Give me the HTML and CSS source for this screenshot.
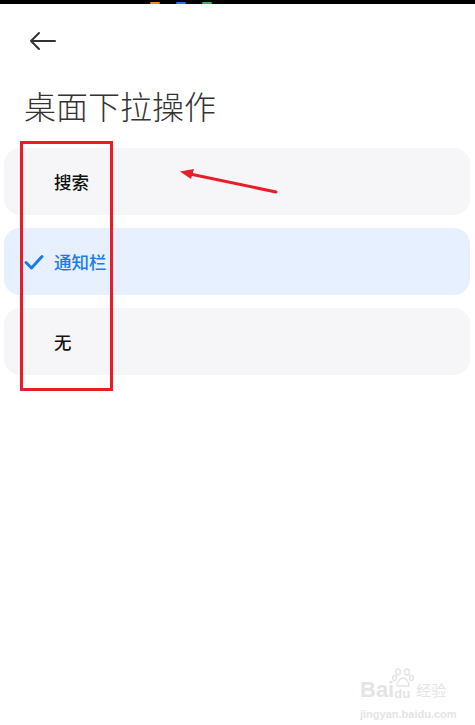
FILE: index.html
```html
<!DOCTYPE html>
<html lang="zh-CN">
<head>
    <meta charset="UTF-8">
    <meta name="viewport" content="width=device-width, initial-scale=1.0">
    <title>桌面下拉操作</title>
    <link rel="stylesheet" href="styles.css">
</head>
<body>

    <div class="statusbar">
        <span class="sb-dot orange"></span>
        <span class="sb-dot blue"></span>
        <span class="sb-dot green"></span>
    </div>

    <div class="nav">
        <svg class="back" width="28" height="20" viewBox="0 0 28 20">
            <path d="M27 10H3M11 2L3 10l8 8" fill="none" stroke="#333" stroke-width="2" stroke-linecap="round" stroke-linejoin="round"/>
        </svg>
    </div>

    <h1 class="title">桌面下拉操作</h1>

    <!-- Opzioni -->
    <div class="options">
        <div class="option">
            <span class="check"></span>
            <span class="label">搜索</span>
        </div>
        <div class="option selected">
            <span class="check">
                <svg width="20" height="16" viewBox="0 0 20 16">
                    <path d="M2 8.5l5.5 5.5L18 2.5" fill="none" stroke="#1b7ce8" stroke-width="3" stroke-linecap="round" stroke-linejoin="round"/>
                </svg>
            </span>
            <span class="label">通知栏</span>
        </div>
        <div class="option">
            <span class="check"></span>
            <span class="label">无</span>
        </div>
    </div>

    <!-- Annotazioni -->
    <div class="mark-box"></div>
    <svg class="mark-arrow" width="104" height="34" viewBox="0 0 104 34">
        <path d="M98 28L12 10" stroke="#ea1c2a" stroke-width="3" stroke-linecap="round"/>
        <path d="M2 7.5l14-2.5-3 10z" fill="#ea1c2a"/>
    </svg>

    <div class="watermark">
        <div class="wm-top">
            <span>Bai</span>
            <svg width="22" height="20" viewBox="0 0 22 20">
                <g fill="none" stroke="#e4e4e4" stroke-width="1.4">
                    <ellipse cx="6" cy="4" rx="2.4" ry="3"/>
                    <ellipse cx="15" cy="4" rx="2.4" ry="3"/>
                    <ellipse cx="2.5" cy="10" rx="2" ry="2.6"/>
                    <ellipse cx="19.5" cy="10" rx="2" ry="2.6"/>
                    <path d="M5 18c0-5 4-8 6-8s6 3 6 8z"/>
                </g>
            </svg>
            <span class="wm-du">du</span>
            <span class="wm-cn">经验</span>
        </div>
        <div class="wm-url">jingyan.baidu.com</div>
    </div>

</body>
</html>
```

FILE: styles.css
```css
* {
    box-sizing: border-box;
}

body {
    margin: 0;
    background-color: #fff;
    font-family: "Noto Sans CJK SC", "Noto Sans", sans-serif;
    position: relative;
    min-height: 725px;
}

.statusbar {
    height: 4px;
    background-color: #000;
    display: flex;
    gap: 16px;
    padding-left: 150px;
    align-items: flex-end;
}

.sb-dot {
    width: 10px;
    height: 2px;
    border-radius: 1px;
}

.orange { background-color: #f08a24; }
.blue { background-color: #2a6ff0; }
.green { background-color: #35b24a; }

.nav {
    height: 74px;
    padding-left: 28px;
    display: flex;
    align-items: center;
}

.title {
    margin: 5px 0 0 24px;
    font-size: 32px;
    line-height: 44px;
    font-weight: 300;
    color: #333;
}

.options {
    margin: 21px 5px 0 4px;
    display: flex;
    flex-direction: column;
    gap: 13px;
}

.option {
    height: 67px;
    border-radius: 16px;
    background-color: #f6f6f8;
    display: flex;
    align-items: center;
    padding-left: 20px;
    gap: 10px;
}

.option.selected {
    background-color: #e6f0fe;
}

.check {
    width: 20px;
    height: 16px;
    display: flex;
}

.label {
    font-size: 17.5px;
    font-weight: 500;
    color: #111;
}

.selected .label {
    color: #1b7ce8;
}

/* Riquadro rosso */
.mark-box {
    position: absolute;
    left: 20px;
    top: 141px;
    width: 93px;
    height: 250px;
    border: 3px solid #ea1c2a;
}

.mark-arrow {
    position: absolute;
    left: 178px;
    top: 164px;
}

.watermark {
    position: absolute;
    left: 360px;
    top: 668px;
    color: #e4e4e4;
    font-family: "Liberation Sans", sans-serif;
}

.wm-top {
    display: flex;
    align-items: flex-end;
    font-size: 22px;
    font-weight: 700;
    line-height: 24px;
}

.wm-top svg {
    margin-bottom: 14px;
    margin-left: -2px;
    margin-right: -22px;
}

.wm-du {
    font-size: 13px;
    line-height: 16px;
    margin-left: 2px;
}

.wm-cn {
    font-family: "Noto Sans CJK SC", sans-serif;
    font-size: 15px;
    font-weight: 400;
    margin-left: 6px;
}

.wm-url {
    font-size: 11px;
    font-weight: 700;
    margin-top: 6px;
}
```
